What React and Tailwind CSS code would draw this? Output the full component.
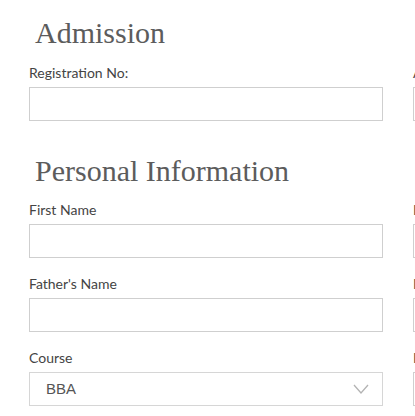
import React from 'react';

function Field({ label, children }) {
  return (
    <div className="mb-4">
      <label className="block mb-1 text-[14px] leading-5 text-[#444] font-['Lato',sans-serif]">{label}</label>
      {children}
    </div>
  );
}

function TextInput() {
  return <input type="text" className="block w-full h-[34px] border border-[#cfcfcf] bg-white outline-none" />;
}

function Select({ value }) {
  return (
    <div className="relative h-[34px] border border-[#d6d6d6] bg-white flex items-center pl-4 pr-[13px]">
      <span className="flex-1 text-[15px] text-[#555] font-['Liberation_Sans',sans-serif]">{value}</span>
      <svg width="16" height="10" viewBox="0 0 16 10" fill="none" stroke="#b3b3b3" strokeWidth="1.3">
        <path d="M1 1l7 8 7-8" />
      </svg>
    </div>
  );
}

export default function App() {
  const heading = "text-[30px] leading-9 text-[#5c5c5c] font-['Liberation_Serif',serif] pl-[6px]";
  return (
    <div className="w-[415px] h-[416px] overflow-hidden bg-white">
      <div className="pl-[29px] pt-[15px] w-[800px]">
        <h1 className={heading + " mb-3"}>Admission</h1>
        <div className="grid grid-cols-[354px_354px] gap-x-[30px]">
          <Field label="Registration No:"><TextInput /></Field>
          <Field label="Admission Date"><TextInput /></Field>
        </div>
        <h2 className={heading + " mt-4 mb-[11px]"}>Personal Information</h2>
        <div className="grid grid-cols-[354px_354px] gap-x-[30px]">
          <Field label="First Name"><TextInput /></Field>
          <Field label="Last Name"><TextInput /></Field>
          <Field label="Father's Name"><TextInput /></Field>
          <Field label="Mother's Name"><TextInput /></Field>
          <Field label="Course"><Select value="BBA" /></Field>
          <Field label="Date of Birth"><TextInput /></Field>
        </div>
      </div>
    </div>
  );
}
